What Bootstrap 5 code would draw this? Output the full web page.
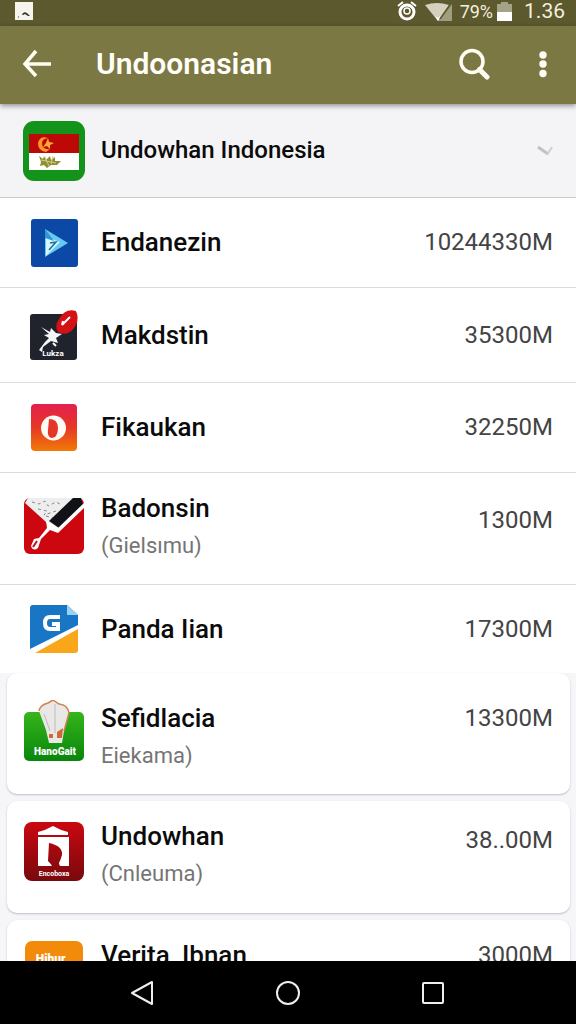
<!DOCTYPE html>
<html lang="id">
<head>
<meta charset="utf-8">
<meta name="viewport" content="width=device-width, initial-scale=1">
<title>Undoonasian</title>
<link href="https://cdn.jsdelivr.net/npm/bootstrap@5.3.0/dist/css/bootstrap.min.css" rel="stylesheet">
<style>
body { font-family: Roboto, "Noto Sans", sans-serif; background: #fff; color: #0b0b0b; }
svg { display: block; flex-shrink: 0; }
.status-bar { height: 26px; background: #5c592f; color: #f2f0dc; padding: 0 11px 3px 14px; font-size: 18px; line-height: 23px; }
.status-bar .clock { font-size: 21px; }
.app-bar { height: 78px; background: #7c7844; color: #fffef8; padding: 0 28px 2px 20px; box-shadow: 0 2px 5px rgba(0,0,0,.4); z-index: 2; }
.app-title { font-size: 30px; line-height: 40px; font-weight: 600; padding-left: 42px; }
.icon-btn { border: 0; padding: 0; background: none; color: #fffdf2; }
.feed { min-height: 0; overflow-y: auto; scrollbar-width: none; }
.feed::-webkit-scrollbar { display: none; }
.section-head { min-height: 94px; border: 0; border-bottom: 1px solid #cbcbd0; background: #f4f4f6; padding: 0 23px; color: inherit; }
.app-row { min-height: 90px; border-bottom: 1px solid #dcdce0; padding: 0 23px; }
.app-row.medium { min-height: 95px; }
.app-row.tall { min-height: 112px; padding-top: 17px; }
.app-row:last-child { min-height: 88px; border-bottom: 0; }
.app-tile { min-height: 112px; border-radius: 10px; background: #fff; padding: 17px 17px 20px 16px; box-shadow: 0 1px 2px rgba(40,40,60,.28); }
.app-tile.roomy { min-height: 121px; padding-top: 27px; }
.tiles { background: #f6f6f9; padding: 0 6px 8px 7px; gap: 7px; }
.app-icon { width: 62px; flex-shrink: 0; }
.app-icon svg { margin: 0 auto; }
.app-name { font-size: 26px; line-height: 37px; font-weight: 500; }
.section-head .app-name { font-size: 24px; }
.app-sub { font-size: 22px; line-height: 37px; color: #757575; }
.app-size { font-size: 24px; line-height: 37px; color: #444; }
.lowered { margin-top: 12px; }
.nav-keys { height: 63px; background: #000; }
</style>
</head>
<body>
<div class="vh-100 d-flex flex-column overflow-hidden">
  <div class="status-bar d-flex align-items-center flex-shrink-0">
    <svg width="20" height="19" viewBox="0 0 20 19"><path fill="#f5f5ee" d="M1 0h18v18H1z"/><path d="M8 13q1-4 5-2l3 3-2 0-3-2-2 1zM4 14l1 1-1 1z" fill="#35352c"/></svg>
    <div class="ms-auto d-flex align-items-center">
      <svg width="20" height="21" viewBox="0 0 20 21" fill="none" stroke="#fff"><circle cx="10" cy="11" r="7" stroke-width="3"/><circle cx="10" cy="10" r="3" stroke-width="1.5"/><path d="M1 5l5-4M19 5l-5-4" stroke-width="2"/></svg>
      <svg class="ms-2" width="27" height="18" viewBox="0 0 27 18"><path d="M27 1v17H13z" fill="#a09e80"/><path d="M0 2Q12-2 24 2L13 18z" fill="#d3d1bd"/><path d="M10 13l3 2 3-3-3 6z" fill="#fff"/><path d="M25 2L15 16" stroke="#5c592f" stroke-width="1.5"/></svg>
      <span class="ms-2">79%</span>
      <svg class="ms-1" width="15" height="19" viewBox="0 0 15 19"><path d="M0 2h4V0h7v2h4v8H0z" fill="#a5a386"/><path d="M0 10h15v9H0z" fill="#fff"/></svg>
      <span class="clock ms-2 ps-1">1.36</span>
    </div>
  </div>

  <header class="app-bar d-flex align-items-center position-relative flex-shrink-0">
    <button class="icon-btn" aria-label="Kembali"><svg width="34" height="30" viewBox="0 0 34 30" fill="none" stroke="currentColor" stroke-width="3.5"><path d="M16 2L5 15l11 12M5 15h26"/></svg></button>
    <h1 class="app-title mb-0 flex-grow-1 text-nowrap">Undoonasian</h1>
    <button class="icon-btn" aria-label="Cari"><svg width="32" height="32" viewBox="0 0 32 32" fill="none" stroke="currentColor"><circle cx="14" cy="13.500" r="11" stroke-width="3.500"/><path d="M21.500 21.500L29 29" stroke-width="5" stroke-linecap="round"/></svg></button>
    <button class="icon-btn ms-5" aria-label="Menu"><svg width="10" height="28" viewBox="0 0 10 28" fill="currentColor"><circle cx="5" cy="5" r="3.700"/><circle cx="5" cy="14" r="3.700"/><circle cx="5" cy="23.500" r="3.700"/></svg></button>
  </header>

  <main class="feed flex-grow-1">
    <button class="section-head w-100 d-flex align-items-center text-start gap-3">
      <span class="app-icon"><svg width="62" height="60" viewBox="0 0 62 60"><rect width="62" height="60" rx="11" fill="#139319"/><path fill="#bd0808" d="M6 13h50v20H6z"/><path fill="#fff" d="M6 32h50v17H6z"/><path d="M25 17Q17 14 15 22q0 8 8 9l4-3q-8 1-8-6 0-4 6-5z" fill="#ff982a"/><path d="M25 17l1 4 5 1-4 2 0 4-3-3-4 1 3-4z" fill="#ffad36"/><path d="M16 35l4 3 1-3 2 4 4-4 1 4 4-3 0 4 6 0-4 4-6 0-4 3-3-3-4 1 1-4z" fill="#8d9133"/><path d="M18 39l15 3M22 36l4 9M30 35l-2 8" stroke="#d9c98a" fill="none"/></svg></span>
      <span class="app-name flex-grow-1">Undowhan Indonesia</span>
      <svg width="16" height="12" viewBox="0 0 16 12" fill="none"><path d="M1 2l10 7" stroke="#c0c0c8" stroke-width="3"/><path d="M10 10l5-8" stroke="#cfcfd5" stroke-width="2"/></svg>
    </button>

    <ul class="list-unstyled mb-0">
      <li class="app-row d-flex align-items-center gap-3">
        <span class="app-icon"><svg width="47" height="48" viewBox="0 0 47 48"><rect width="47" height="48" rx="3" fill="#0c48a5"/><path d="M14 10l23 14-23 14z" fill="#66c9f2"/><path d="M15 18l14 5-14 14z" fill="#d7f5fb"/><path d="M14 10l9 12-9-3z" fill="#3195d8"/><path d="M18 31l7-8-6 1" fill="none" stroke="#16739e" stroke-width="1.500"/></svg></span>
        <span class="app-name flex-grow-1">Endanezin</span><span class="app-size">10244330M</span>
      </li>
      <li class="app-row medium d-flex align-items-center gap-3">
        <span class="app-icon"><svg width="48" height="50" viewBox="0 0 48 50"><rect y="4" width="47" height="46" rx="3" fill="#20232b"/><path d="M46 1Q35-2 29 9q-5 7-1 13 9 5 16-4 6-8 2-17z" fill="#d51118"/><path d="M32 15l8-8M32 15l1-4" stroke="#fff" stroke-width="2"/><path d="M11 17l9 5 1-4 5 5 6 1-6 4 2 5-7-2-8 6-1 5-3-2 6-8 4-4-5-3 5-1z" fill="#f5f5f7"/><path d="M23 33l3 3" stroke="#fff" stroke-width="2"/><text x="23" y="46" text-anchor="middle" font-family="Roboto" font-size="8" font-weight="700" fill="#fff">Lukza</text></svg></span>
        <span class="app-name flex-grow-1">Makdstin</span><span class="app-size">35300M</span>
      </li>
      <li class="app-row d-flex align-items-center gap-3">
        <span class="app-icon"><svg width="46" height="47" viewBox="0 0 46 47"><defs><linearGradient id="sunset" x2="0" y2="1"><stop stop-color="#e3204f"/><stop offset=".5" stop-color="#e63725"/><stop offset="1" stop-color="#f27b08"/></linearGradient></defs><rect width="46" height="47" rx="4" fill="url(#sunset)"/><circle cx="22.500" cy="24" r="12.500" fill="#fffaf3"/><path d="M18 15q9 0 9 9 0 10-7 10-4-2-3-8z" fill="#e43728"/></svg></span>
        <span class="app-name flex-grow-1">Fikaukan</span><span class="app-size">32250M</span>
      </li>
      <li class="app-row tall d-flex align-items-start gap-3">
        <span class="app-icon pt-2"><svg width="60" height="56" viewBox="0 0 60 56"><rect width="60" height="56" rx="6" fill="#cd0710"/><path d="M1 5l3-5h54L33 33l-11-9z" fill="#eee"/><path d="M8 4l7 2 6-3 3 5 8-4 6 3M14 11l9 2-3 4 12-4M22 18l7 2" fill="none" stroke="#888" stroke-dasharray="3 3"/><path d="M49 0h8l2 7-24 23-10-7z" fill="#111217"/><path d="M22 23l12 7L60 5v5L34 35l-8-3-9 9-3 9q-5 4-7-2l3-7 5-1 8-10z" fill="#fff"/><path d="M13 43l-4 6" stroke="#cd0710" stroke-width="2"/></svg></span>
        <div class="flex-grow-1"><div class="app-name">Badonsin</div><div class="app-sub">(Gielsımu)</div></div><span class="app-size lowered">1300M</span>
      </li>
      <li class="app-row d-flex align-items-center gap-3">
        <span class="app-icon"><svg width="48" height="48" viewBox="0 0 48 48"><path d="M3 0h34l11 10v13L0 47V3q0-3 3-3z" fill="#1876c4"/><path d="M37 0l11 10H37z" fill="#9bd2ef"/><path d="M48 20v7L5 47H0v-3z" fill="#fff"/><path d="M48 24v21q0 3-3 3H5z" fill="#f9a61a"/><path d="M30 12H20q-5 0-5 6t5 6h8v-5h-6" fill="none" stroke="#fff" stroke-width="4"/></svg></span>
        <span class="app-name flex-grow-1">Panda Iian</span><span class="app-size">17300M</span>
      </li>
    </ul>

    <div class="tiles d-flex flex-column">
      <article class="app-tile roomy d-flex align-items-start gap-3">
        <span class="app-icon"><svg width="60" height="61" viewBox="0 0 60 61"><defs><linearGradient id="leaf" x2="0" y2="1"><stop stop-color="#36b51c"/><stop offset="1" stop-color="#07860c"/></linearGradient></defs><rect y="12" width="60" height="49" rx="5" fill="url(#leaf)"/><path d="M15 11q1-6 9-8l5-3 6 4q9 1 10 9l-5 18-2 12H25l-3-13z" fill="#e9e8e7"/><path d="M15 11q1-6 9-8l5-3 6 4q9 1 10 9l-5 18" fill="none" stroke="#cf8350" stroke-width="1.500"/><path d="M31 4v29M20 14l6 17" stroke="#bbbcc0"/><path d="M25 34h4v4h-4zM33 32l6-4-1 10h-5z" fill="#cb6c3b"/><text x="31" y="55" text-anchor="middle" font-family="Roboto" font-size="10" font-weight="900" fill="#fff">HanoGait</text></svg></span>
        <div class="flex-grow-1"><div class="app-name">Sefidlacia</div><div class="app-sub">Eiekama)</div></div><span class="app-size">13300M</span>
      </article>
      <article class="app-tile d-flex align-items-start gap-3">
        <span class="app-icon pt-1"><svg width="60" height="59" viewBox="0 0 60 59"><defs><linearGradient id="ruby" x2="0" y2="1"><stop stop-color="#cb0710"/><stop offset="1" stop-color="#78090e"/></linearGradient></defs><rect width="60" height="59" rx="8" fill="url(#ruby)"/><path d="M14 10q8-2 15-6 7 4 15 6v3H14z" fill="#fff"/><path d="M14 15h31v29H36q-2-3 0-5l2-6q1-9-13-12l-1 18q3 3 4 5H14z" fill="#fff"/><text x="30" y="54" text-anchor="middle" font-family="Roboto" font-size="7" font-weight="700" fill="#fff">Encoboxa</text></svg></span>
        <div class="flex-grow-1"><div class="app-name">Undowhan</div><div class="app-sub">(Cnleuma)</div></div><span class="app-size pt-1">38..00M</span>
      </article>
      <article class="app-tile d-flex align-items-start gap-3">
        <span class="app-icon pt-1"><svg width="58" height="58" viewBox="0 0 58 58"><rect width="58" height="58" rx="7" fill="#f28b09"/><text x="27" y="22" text-anchor="middle" font-family="Roboto" font-size="12" font-weight="900" fill="#fff">Hihur.</text></svg></span>
        <div class="flex-grow-1"><div class="app-name">Verita, Ibnan</div></div><span class="app-size">3000M</span>
      </article>
    </div>
  </main>

  <nav class="nav-keys d-flex align-items-center justify-content-center flex-shrink-0">
    <div class="row g-0 w-75 justify-content-between">
      <button class="icon-btn col-4 d-flex justify-content-center" aria-label="Mundur"><svg width="26" height="26" viewBox="0 0 26 26" fill="none" stroke="#eee" stroke-width="2"><path d="M1 13L21 2v22z" stroke-linejoin="round"/></svg></button>
      <button class="icon-btn col-4 d-flex justify-content-center" aria-label="Beranda"><svg width="26" height="26" viewBox="0 0 26 26" fill="none" stroke="#eee" stroke-width="2"><circle cx="13" cy="13" r="11"/></svg></button>
      <button class="icon-btn col-4 d-flex justify-content-center" aria-label="Terbaru"><svg width="26" height="26" viewBox="0 0 26 26" fill="none" stroke="#eee" stroke-width="2"><rect x="4" y="3" width="20" height="20" rx="1"/></svg></button>
    </div>
  </nav>
</div>
<script src="https://cdn.jsdelivr.net/npm/bootstrap@5.3.0/dist/js/bootstrap.bundle.min.js"></script>
</body>
</html>
